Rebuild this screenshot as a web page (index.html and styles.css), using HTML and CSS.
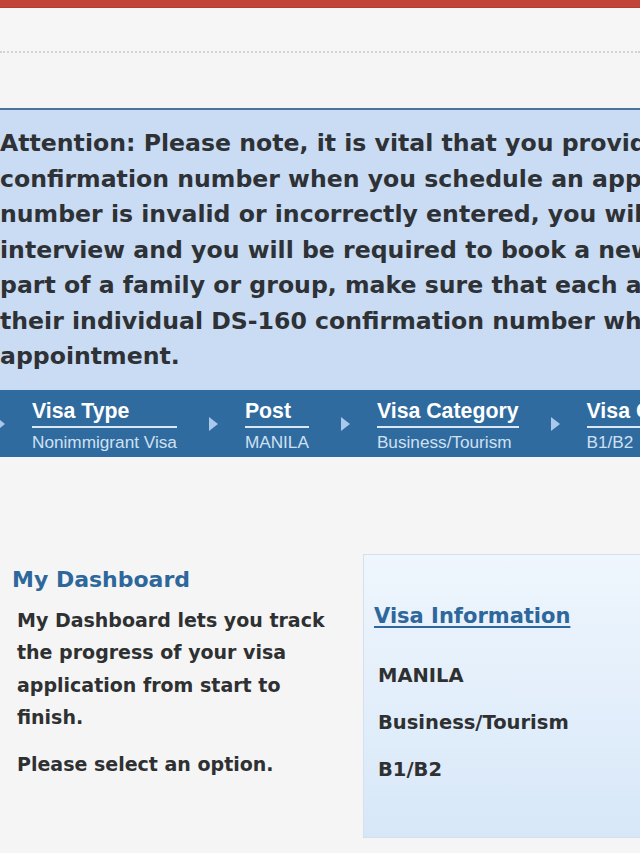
FILE: index.html
```html
<!DOCTYPE html>
<html lang="en">
<head>
<meta charset="utf-8">
<title>My Dashboard</title>
<link rel="stylesheet" href="styles.css">
</head>
<body>
<div class="page">
  <div class="topbar"></div>
  <div class="toolbar"></div>

  <div class="alert">
    <p class="alert-text">Attention: Please note, it is vital that you provide the correct DS-160<br>confirmation number when you schedule an appointment. If the DS-160 confirmation<br>number is invalid or incorrectly entered, you will not be able to attend your visa<br>interview and you will be required to book a new appointment. If you are applying as<br>part of a family or group, make sure that each applicant in the family or group has<br>their individual DS-160 confirmation number when you schedule the<br>appointment.</p>

    <div class="crumbs">
      <span class="arrow first"></span>
      <div class="crumb">
        <div class="crumb-title">Visa Type</div>
        <div class="crumb-value">Nonimmigrant Visa</div>
      </div>
      <span class="arrow"></span>
      <div class="crumb">
        <div class="crumb-title">Post</div>
        <div class="crumb-value">MANILA</div>
      </div>
      <span class="arrow"></span>
      <div class="crumb">
        <div class="crumb-title">Visa Category</div>
        <div class="crumb-value">Business/Tourism</div>
      </div>
      <span class="arrow"></span>
      <div class="crumb">
        <div class="crumb-title">Visa Class</div>
        <div class="crumb-value">B1/B2</div>
      </div>
    </div>
  </div>

  <div class="main">
    <div class="intro">
      <h1 class="intro-title">My Dashboard</h1>
      <p class="intro-text">My Dashboard lets you track the progress of your visa application from start to finish.</p>
      <p class="intro-text second">Please select an option.</p>
    </div>
    <div class="info">
      <a class="info-title" href="#">Visa Information</a>
      <div class="info-item first">MANILA</div>
      <div class="info-item">Business/Tourism</div>
      <div class="info-item">B1/B2</div>
    </div>
  </div>
</div>
</body>
</html>
```
FILE: styles.css
```css
html, body {
  margin: 0;
  padding: 0;
}
body {
  background: #f5f5f5;
  font-family: "DejaVu Sans", Verdana, sans-serif;
  color: #333;
  overflow: hidden;
}
.page {
  width: 640px;
  overflow: hidden;
}
.topbar {
  height: 7px;
  background: #c2433a;
  border-bottom: 1px solid #b13d36;
  box-shadow: 0 1px 0 #fbeeee, 0 2px 0 #f6f3f8;
}
.toolbar {
  height: 43px;
  border-bottom: 2px dotted #d2d2d2;
  background: #f6f6f7;
}
.alert {
  margin-top: 55px;
  border-top: 2px solid #4f7299;
  box-shadow: 0 -1px 0 #eaf6fd;
  background: #c9dcf3;
  padding-top: 16px;
  white-space: nowrap;
  overflow: hidden;
}
.alert-text {
  margin: 0 0 15px 0;
  font-weight: bold;
  font-size: 23.6px;
  line-height: 35.5px;
  color: #2e3236;
}
.crumbs {
  display: flex;
  align-items: flex-start;
  background: #2f6b9e;
  height: 67px;
  box-sizing: border-box;
  padding-top: 9px;
  font-family: "Liberation Sans", Arial, sans-serif;
}
.arrow {
  flex: none;
  width: 0;
  height: 0;
  border-top: 7px solid transparent;
  border-bottom: 7px solid transparent;
  border-left: 9px solid #a9c8ec;
  margin: 18px 27px 0 32px;
}
.arrow.first {
  margin-left: -4px;
}
.crumb {
  flex: none;
}
.crumb-title {
  font-weight: bold;
  font-size: 21.3px;
  line-height: 24px;
  color: #ffffff;
  padding-bottom: 3px;
  border-bottom: 2px solid #dbe9f7;
}
.crumb-value {
  margin-top: 4px;
  font-size: 17.2px;
  line-height: 20px;
  color: #cfe0f3;
}
.main {
  display: flex;
  align-items: flex-start;
  padding-top: 97px;
}
.intro {
  width: 363px;
  flex: none;
  padding-top: 12px;
  box-sizing: border-box;
}
.intro-title {
  margin: 0 0 10px 12px;
  font-size: 22px;
  line-height: 28px;
  font-weight: bold;
  color: #2d679b;
}
.intro-text {
  margin: 0 0 0 17px;
  width: 318px;
  font-size: 19px;
  line-height: 32.5px;
  font-weight: bold;
  color: #2e3032;
}
.intro-text.second {
  margin-top: 14px;
}
.info {
  flex: none;
  width: 320px;
  height: 284px;
  box-sizing: border-box;
  border: 1px solid #d2e0f0;
  background: linear-gradient(#eff6fd, #d7e7f8);
  padding: 46px 0 0 10px;
}
.info-title {
  display: block;
  font-size: 21px;
  line-height: 30px;
  font-weight: bold;
  color: #2d679b;
  text-decoration: underline;
  text-underline-offset: 3px;
  text-decoration-thickness: 2px;
}
.info-item {
  margin-left: 4px;
  font-size: 19.5px;
  line-height: 47px;
  font-weight: bold;
  color: #2e3032;
}
.info-item.first {
  margin-top: 21px;
}
```
